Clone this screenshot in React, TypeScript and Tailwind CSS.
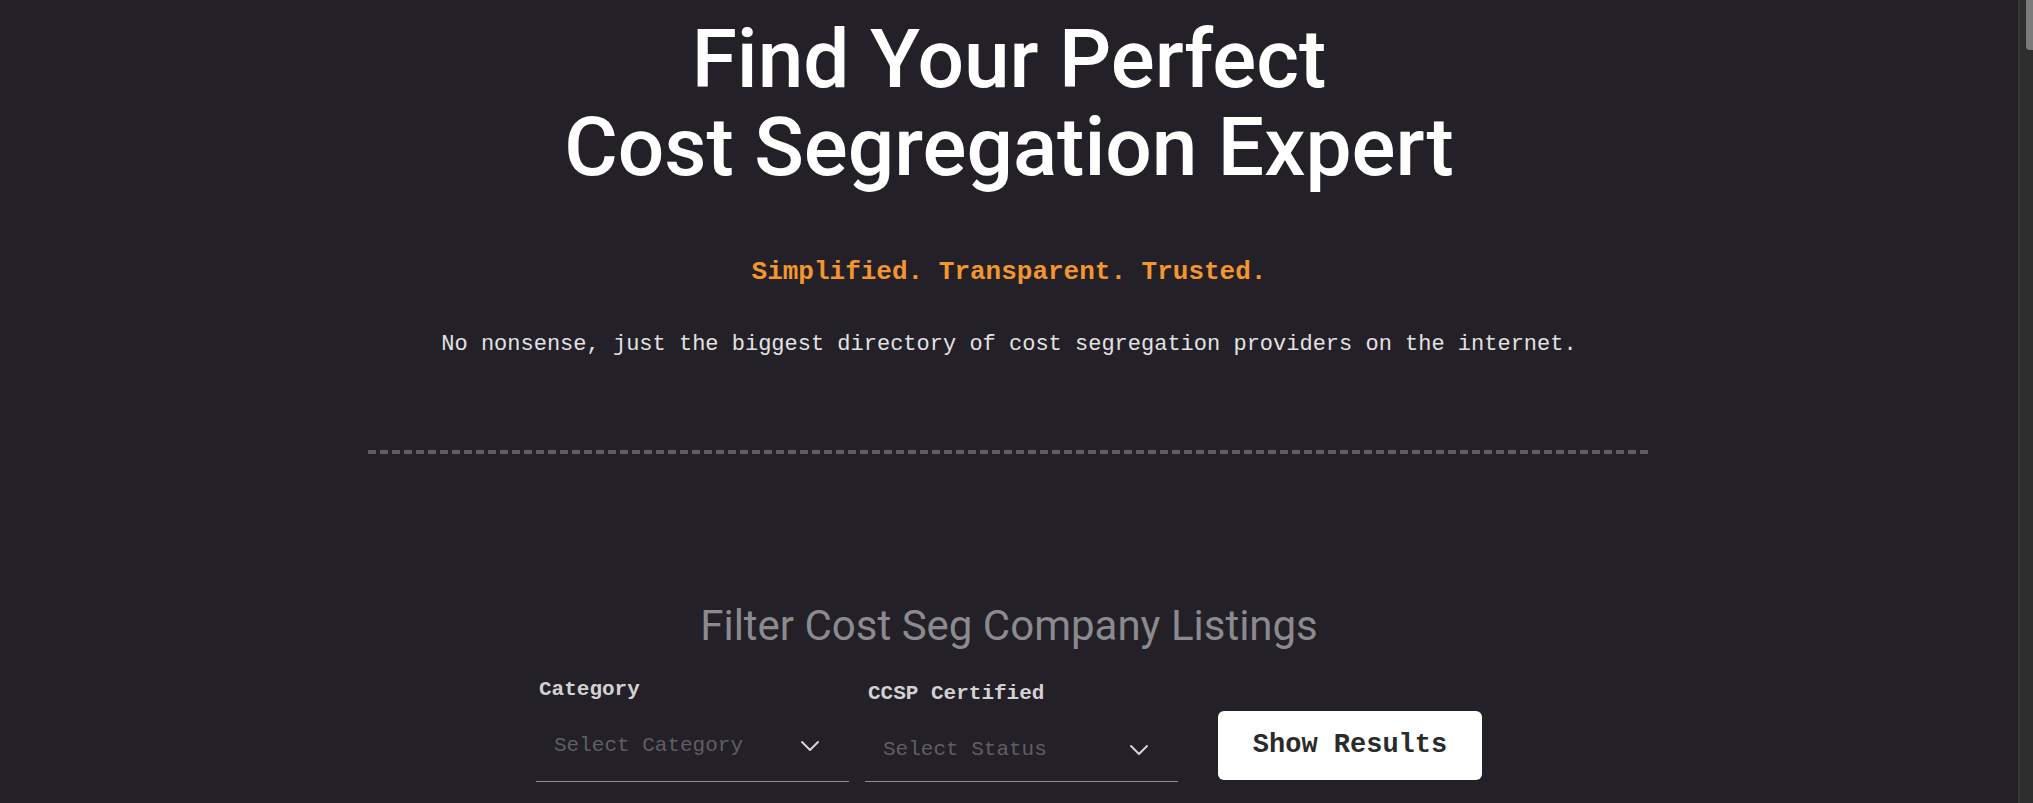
import React from 'react';
import { ChevronDown } from 'lucide-react';

const FILTERS = [
  { id: 'category', label: 'Category', placeholder: 'Select Category', labelClass: '', boxClass: 'h-[77px] pt-[6px]' },
  { id: 'ccsp', label: 'CCSP Certified', placeholder: 'Select Status', labelClass: 'pt-1', boxClass: 'h-[73px] pt-[9px]' },
];

function FilterSelect({ label, placeholder, labelClass, boxClass }: (typeof FILTERS)[number]) {
  return (
    <div className="flex w-[313px] flex-col">
      <label className={`pl-[3px] font-['Liberation_Mono',monospace] text-[21px] leading-[31px] font-bold text-[#d2d2d2] ${labelClass}`}>
        {label}
      </label>
      <button
        type="button"
        className={`flex items-center justify-between border-b border-[#8e8e8e] pr-[23px] pl-[18px] text-left ${boxClass}`}
      >
        <span className="font-['Liberation_Mono',monospace] text-[21px] text-[#5f5f63]">{placeholder}</span>
        <ChevronDown size={32} strokeWidth={1.5} className="text-[#d6d6d6]" />
      </button>
    </div>
  );
}

export default function App() {
  return (
    <div className="flex h-screen overflow-hidden bg-[#242028]">
      <main className="flex flex-1 flex-col items-center pt-[15px]">
        {/* Hero */}
        <h1 className="text-center font-['Roboto',sans-serif] text-[82px] leading-[88px] font-medium text-white">
          Find Your Perfect
          <br />
          Cost Segregation Expert
        </h1>

        <p className="mt-[62px] font-['Liberation_Mono',monospace] text-[26px] leading-[39px] font-bold text-[#f3962e]">
          Simplified. Transparent. Trusted.
        </p>

        <p className="mt-[36px] font-['Liberation_Mono',monospace] text-[22px] leading-[33px] text-[#e2e2e2]">
          No nonsense, just the biggest directory of cost segregation providers on the internet.
        </p>

        <div className="mt-[89px] h-1 w-[1283px] bg-[image:repeating-linear-gradient(90deg,#5e5e60_0px,#5e5e60_8px,transparent_8px,transparent_12px)]" />

        {/* Filters */}
        <section className="mt-[147px] flex flex-col items-center">
          <h2 className="font-['Roboto',sans-serif] text-[42px] leading-[50px] font-normal text-[#8b8a8e]">
            Filter Cost Seg Company Listings
          </h2>

          <div className="mt-[23px] flex items-end">
            <div className="flex gap-4">
              {FILTERS.map((f) => (
                <FilterSelect key={f.id} {...f} />
              ))}
            </div>
            <button
              type="button"
              className="mb-[2px] ml-10 h-[69px] w-[264px] rounded-md bg-white font-['Liberation_Mono',monospace] text-[27px] font-bold text-[#2b2b2b]"
            >
              Show Results
            </button>
          </div>
        </section>
      </main>

      {/* page scrollbar */}
      <aside className="w-[15px] shrink-0 border-l-2 border-[#3a3a3a] bg-[#2d2d2d]">
        <div className="ml-[6px] h-[50px] rounded-bl-[4px] bg-[#7a7a7a]" />
      </aside>
    </div>
  );
}
